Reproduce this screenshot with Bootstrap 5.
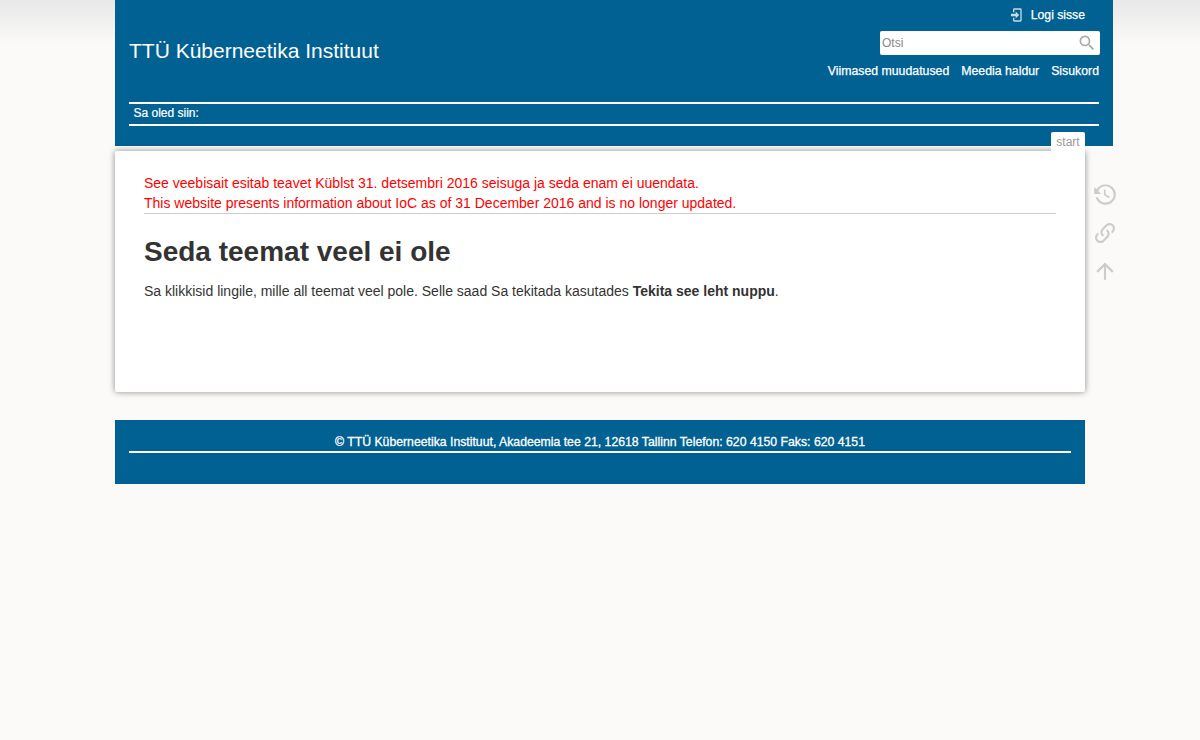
<!DOCTYPE html>
<html lang="et">
<head>
<meta charset="utf-8">
<title>TTÜ Küberneetika Instituut</title>
<link href="https://cdn.jsdelivr.net/npm/bootstrap@5.3.0/dist/css/bootstrap.min.css" rel="stylesheet">
<style>
html,body{height:100%}
body{font-family:"Liberation Sans",Arial,sans-serif;font-size:14px;line-height:1.4;color:#333;background:#fbfaf9 linear-gradient(to bottom,#e8e8e8 0,#fbfaf9 45px) no-repeat;}
.site-wrap{width:998px;margin-left:115px}
.site-head{background:#006192;height:146px;padding:0 14px;color:#fff}
.head-top{height:101px}
.site-title{font-size:21px;line-height:24px;color:#fff;padding-top:39px;margin:0}
.user-line{font-size:12.2px;font-weight:400;line-height:16px;padding-top:7px;padding-right:14px}
.user-line svg{width:16px;height:16px;fill:#c6dbe6;margin-right:2px;vertical-align:-4px}
.search-box{width:220px;height:24px;background:#fff;border-radius:2px;margin-top:8px;margin-right:-1px;padding:0 2px;box-shadow:inset 0 0 1px #ccc}
.search-box input{border:0;outline:0;flex:1;min-width:0;font:12px "Liberation Sans",Arial,sans-serif;color:#555;padding:0;background:transparent}
.search-box input::placeholder{color:#888;opacity:1}
.search-box svg{width:20px;height:20px;fill:#aaa;margin-right:1px}
.tool-links{font-size:12.3px;font-weight:400;line-height:16px;margin-top:8px;gap:12px}
.tool-links a,.user-line a{color:#fff;text-decoration:none;-webkit-text-stroke:.25px #fff}
.crumbs{border-top:2px solid #fff;border-bottom:2px solid #fff;height:24px;font-size:12px;line-height:19px;padding:0 4.5px;margin-top:1px;-webkit-text-stroke:.2px #fff}
.content-row{width:970px;position:relative;margin-top:5px}
.page-panel{background:#fff;height:241px;border-radius:2px;box-shadow:0 0 6px rgba(0,0,0,.45);padding:22px 29px 0}
.notice{color:#f00;line-height:20px;border-bottom:1px solid #ccc;padding-bottom:1px;height:41px;margin-top:0}
.page-h{font-size:28px;font-weight:700;line-height:32px;color:#333;margin:22px 0 13px}
.page-p{margin:0;line-height:20px}
.page-tab{position:absolute;right:0;top:-19px;width:34px;height:21px;background:#fff;color:#999;font-size:12px;line-height:20px;text-align:center;border-radius:2px 2px 0 0}
.side-tools{position:absolute;left:977px;top:31px;gap:12px}
.side-tools svg{display:block;width:26px;height:26px;fill:#ccc}
.site-foot{width:970px;height:64px;background:#006192;margin-top:28px;padding:0 14px;color:#fff}
.foot-line{border-bottom:2px solid #fff;height:33px;padding-top:15px;font-size:12.25px;font-weight:400;-webkit-text-stroke:.3px #fff;line-height:15px;text-align:center}
</style>
</head>
<body>
<div class="site-wrap">
  <header class="site-head">
    <div class="head-top d-flex justify-content-between">
      <h1 class="site-title fw-normal">TTÜ Küberneetika Instituut</h1>
      <div class="d-flex flex-column align-items-end">
        <div class="user-line"><a href="#"><svg viewBox="0 0 24 24"><path d="M10 17.25V14H3v-4h7V6.75L15.25 12 10 17.25M8 2h9a2 2 0 0 1 2 2v16a2 2 0 0 1-2 2H8a2 2 0 0 1-2-2v-4h2v4h9V4H8v4H6V4a2 2 0 0 1 2-2z"/></svg> Logi sisse</a></div>
        <form class="search-box d-flex align-items-center" onsubmit="return false">
          <input type="text" placeholder="Otsi" aria-label="Otsi">
          <svg viewBox="0 0 24 24"><path d="M9.5 3A6.5 6.5 0 0 1 16 9.5c0 1.61-.59 3.09-1.56 4.23l.27.27h.79l5 5-1.5 1.5-5-5v-.79l-.27-.27A6.52 6.52 0 0 1 9.5 16 6.5 6.5 0 0 1 3 9.5 6.5 6.5 0 0 1 9.5 3m0 2C7 5 5 7 5 9.5S7 14 9.5 14 14 12 14 9.5 12 5 9.5 5z"/></svg>
        </form>
        <nav class="tool-links d-flex"><a href="#">Viimased muudatused</a><a href="#">Meedia haldur</a><a href="#">Sisukord</a></nav>
      </div>
    </div>
    <div class="crumbs">Sa oled siin:</div>
  </header>
  <div class="content-row">
    <div class="page-tab">start</div>
    <main class="page-panel">
      <div class="notice">See veebisait esitab teavet Küblst 31. detsembri 2016 seisuga ja seda enam ei uuendata.<br>This website presents information about IoC as of 31 December 2016 and is no longer updated.</div>
      <h2 class="page-h">Seda teemat veel ei ole</h2>
      <p class="page-p">Sa klikkisid lingile, mille all teemat veel pole. Selle saad Sa tekitada kasutades <strong>Tekita see leht nuppu</strong>.</p>
    </main>
    <div class="side-tools d-flex flex-column">
      <svg viewBox="0 0 24 24"><path d="M11 7v5.11l4.71 2.79.79-1.28-4-2.37V7m.5-5C8.97 2 5.91 3.92 4.27 6.77L2 4.5V11h6.5L5.75 8.25C6.96 5.73 9.5 4 12.5 4a7.5 7.5 0 0 1 7.5 7.5 7.5 7.5 0 0 1-7.5 7.5c-3.27 0-6.03-2.09-7.06-5h-2.1c1.1 4.03 4.77 7 9.16 7 5.24 0 9.5-4.25 9.5-9.5A9.5 9.5 0 0 0 12.5 2z"/></svg>
      <svg viewBox="0 0 24 24"><path d="M10.59,13.41C11,13.8 11,14.44 10.59,14.83C10.2,15.22 9.56,15.22 9.17,14.83C7.22,12.88 7.22,9.71 9.17,7.76L12.71,4.22C14.66,2.27 17.83,2.27 19.78,4.22C21.73,6.17 21.73,9.34 19.78,11.29L18.29,12.78C18.3,11.96 18.17,11.14 17.89,10.36L18.36,9.88C19.54,8.71 19.54,6.81 18.36,5.64C17.19,4.46 15.29,4.46 14.12,5.64L10.59,9.17C9.41,10.34 9.41,12.24 10.59,13.41M13.41,9.17C13.8,8.78 14.44,8.78 14.83,9.17C16.78,11.12 16.78,14.29 14.83,16.24L11.29,19.78C9.34,21.73 6.17,21.73 4.22,19.78C2.27,17.83 2.27,14.66 4.22,12.71L5.71,11.22C5.7,12.04 5.83,12.86 6.11,13.65L5.64,14.12C4.46,15.29 4.46,17.19 5.64,18.36C6.81,19.54 8.71,19.54 9.88,18.36L13.41,14.83C14.59,13.66 14.59,11.76 13.41,10.59C13,10.2 13,9.56 13.41,9.17Z"/></svg>
      <svg viewBox="0 0 24 24"><path d="M13,20H11V8L5.5,13.5L4.08,12.08L12,4.16L19.92,12.08L18.5,13.5L13,8V20Z"/></svg>
    </div>
  </div>
  <footer class="site-foot"><div class="foot-line">© TTÜ Küberneetika Instituut, Akadeemia tee 21, 12618 Tallinn Telefon: 620 4150 Faks: 620 4151</div></footer>
</div>
<script src="https://cdn.jsdelivr.net/npm/bootstrap@5.3.0/dist/js/bootstrap.bundle.min.js"></script>
</body>
</html>
